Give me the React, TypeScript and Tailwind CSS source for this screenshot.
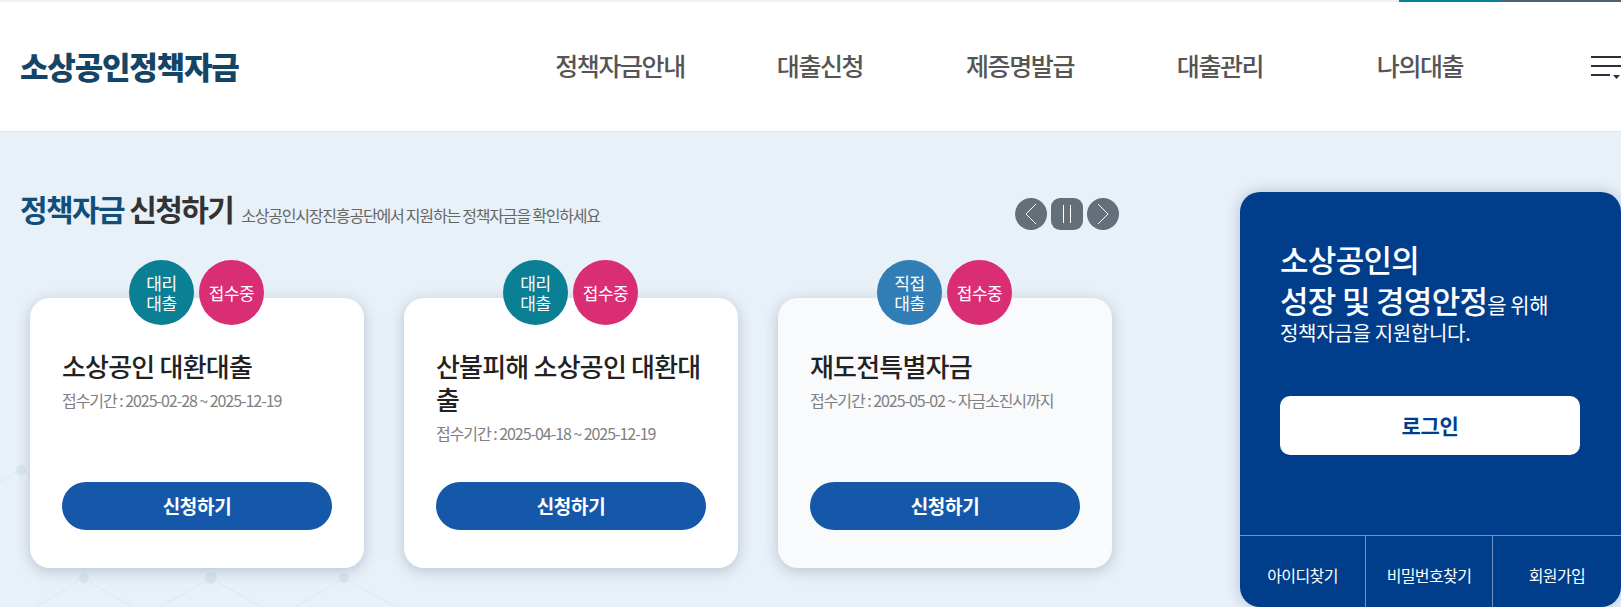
const font = { fontFamily: '"Noto Sans CJK KR", "Noto Sans", sans-serif' };

const navItems = ["정책자금안내", "대출신청", "제증명발급", "대출관리", "나의대출"];

const cards = [
  { type: ["대리", "대출"], color: "bg-[#0b8094]", title: "소상공인 대환대출", period: "접수기간 : 2025-02-28 ~ 2025-12-19", bg: "bg-white" },
  { type: ["대리", "대출"], color: "bg-[#0b8094]", title: "산불피해 소상공인 대환대출", period: "접수기간 : 2025-04-18 ~ 2025-12-19", bg: "bg-white" },
  { type: ["직접", "대출"], color: "bg-[#317db5]", title: "재도전특별자금", period: "접수기간 : 2025-05-02 ~ 자금소진시까지", bg: "bg-[#f9fafc]" },
];

function Network() {
  const nodes: [number, number, number][] = [[21, 338, 5], [84, 446, 5], [211, 446, 6], [344, 446, 5]];
  const lines = [
    [0, 350, 21, 338], [21, 338, 40, 349], [84, 446, 35, 475], [84, 446, 132, 475], [84, 446, 84, 430],
    [211, 446, 160, 475], [211, 446, 262, 475], [344, 446, 295, 475], [344, 446, 395, 475],
  ];
  return (
    <svg className="absolute left-0 top-0 h-[475px] w-[420px]" viewBox="0 0 420 475" fill="none">
      {lines.map((l, i) => (
        <line key={i} x1={l[0]} y1={l[1]} x2={l[2]} y2={l[3]} stroke="#dbe8f1" strokeWidth="1" />
      ))}
      {nodes.map((n, i) => (
        <circle key={i} cx={n[0]} cy={n[1]} r={n[2]} fill="#d8e6ee" />
      ))}
    </svg>
  );
}

function Card({ c }: { c: (typeof cards)[number] }) {
  return (
    <div className={`relative flex h-[270px] w-[334px] flex-col rounded-[20px] px-8 pt-[51px] pb-[38px] shadow-[0_3px_14px_rgba(60,85,115,0.28)] ${c.bg}`}>
      <div className="absolute left-[99px] top-[-38px] flex gap-[5px]">
        <div className={`flex h-[65px] w-[65px] items-center justify-center rounded-full text-center text-[17px] leading-[20px] tracking-[-0.5px] text-white ${c.color}`}>
          <p>
            {c.type[0]}
            <br />
            {c.type[1]}
          </p>
        </div>
        <div className="flex h-[65px] w-[65px] items-center justify-center rounded-full bg-[#d92d74] text-[17px] tracking-[-0.5px] text-white">
          접수중
        </div>
      </div>
      <h3 className="text-[26px] font-medium leading-[33px] tracking-[-0.8px] text-[#222]">{c.title}</h3>
      <p className="mt-[7px] text-[16px] leading-[22px] tracking-[-1.05px] text-[#808080]">{c.period}</p>
      <button className="mt-auto h-[48px] w-[270px] shrink-0 rounded-full bg-[#1558aa] text-[19px] font-bold tracking-[-0.3px] text-white">
        신청하기
      </button>
    </div>
  );
}

export default function App() {
  return (
    <div style={font} className="h-[607px] w-[1621px] overflow-hidden bg-[#e8f0f8]">
      <div className="flex h-[2px] justify-end bg-[#edf2f6]">
        <div className="h-full w-[103px] bg-[#0b8094]" />
        <div className="h-full w-[119px] bg-[#4f6075]" />
      </div>
      <header className="flex h-[130px] items-center border-b border-[#dde3ea] bg-white pl-5">
        <div className="w-[500px] text-[31px] font-black tracking-[-1.2px] text-[#144566]">소상공인정책자금</div>
        <nav className="-mt-[2px] flex">
          {navItems.map((n) => (
            <a key={n} className="w-[200px] text-center text-[25px] font-medium tracking-[-1.4px] text-[#555]">
              {n}
            </a>
          ))}
        </nav>
        <svg className="ml-[71px] shrink-0" width="30" height="26" viewBox="0 0 30 26">
          <rect x="0" y="2" width="30" height="2" fill="#2a2e38" />
          <rect x="0" y="11" width="30" height="2" fill="#2a2e38" />
          <rect x="0" y="20" width="19" height="2" fill="#2a2e38" />
          <path d="M22 21h7l-3.500 4z" fill="#2a2e38" />
        </svg>
      </header>
      <main className="relative flex h-[475px]">
        <Network />
        <section className="relative w-[1240px] pl-5 pt-[56px]">
          <div className="flex h-[40px] w-[1099px] items-center">
            <h2 className="text-[30px] font-bold tracking-[-1.6px] text-[#333]">
              <span className="text-[#104f7c]">정책자금</span> 신청하기
            </h2>
            <p className="ml-2 mt-[13px] text-[16px] tracking-[-1.2px] text-[#666]">
              소상공인시장진흥공단에서 지원하는 정책자금을 확인하세요
            </p>
            <div className="ml-auto mt-[12px] flex gap-1">
              <button className="flex h-[32px] w-[32px] items-center justify-center rounded-full bg-[#646f7a]">
                <svg width="12" height="22" viewBox="0 0 12 22" fill="none" stroke="#fff" strokeWidth="1"><path d="M11 1 1 11l10 10" /></svg>
              </button>
              <button className="flex h-[32px] w-[32px] items-center justify-center rounded-[9px] bg-[#646f7a]">
                <svg width="10" height="18" viewBox="0 0 10 18" fill="none" stroke="#fff" strokeWidth="1"><path d="M1.500 0v18M8.500 0v18" /></svg>
              </button>
              <button className="flex h-[32px] w-[32px] items-center justify-center rounded-full bg-[#646f7a]">
                <svg width="12" height="22" viewBox="0 0 12 22" fill="none" stroke="#fff" strokeWidth="1"><path d="m1 1 10 10L1 21" /></svg>
              </button>
            </div>
          </div>
          <div className="ml-[10px] mt-[70px] flex gap-10">
            {cards.map((c) => (
              <Card key={c.title} c={c} />
            ))}
          </div>
        </section>
        <aside className="relative mt-[60px] flex h-[415px] w-[381px] flex-col rounded-[20px] bg-[#003e8c] shadow-[0_0_14px_rgba(60,85,115,0.3)]">
          <div className="flex-1 px-10 pt-[46px]">
            <p className="text-[31px] font-medium leading-[41px] tracking-[-0.7px] text-white">소상공인의</p>
            <p className="text-[31px] font-medium leading-[41px] tracking-[-0.7px] text-white">
              성장 및 경영안정<span className="text-[21px] font-normal tracking-[-0.5px]">을 위해</span>
            </p>
            <p className="-mt-[7px] text-[20px] leading-[29px] tracking-[-0.3px] text-white">정책자금을 지원합니다.</p>
            <button className="mt-[49px] h-[59px] w-[300px] rounded-[10px] bg-white text-[21px] font-bold tracking-[-0.3px] text-[#003e8c]">로그인</button>
          </div>
          <div className="flex h-[72px] border-t border-[#6f91c4] text-[16px] tracking-[-0.6px] text-white">
            <a className="flex w-[125px] items-center justify-center pt-[7px]">아이디찾기</a>
            <a className="flex w-[128px] items-center justify-center border-x border-[#6f91c4] pt-[7px]">비밀번호찾기</a>
            <a className="flex flex-1 items-center justify-center pt-[7px]">회원가입</a>
          </div>
        </aside>
      </main>
    </div>
  );
}
